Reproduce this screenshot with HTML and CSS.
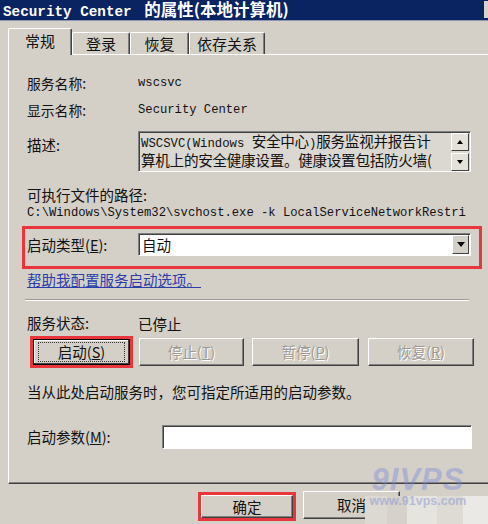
FILE: index.html
```html
<!DOCTYPE html>
<html lang="zh-CN">
<head>
<meta charset="utf-8">
<title>Security Center 的属性</title>
<link rel="stylesheet" href="styles.css">
</head>
<body>
<div class="window">
  <div class="titlebar">
    <span class="title"><span class="tmono">Security Center </span>的属性(本地计算机)</span>
    <span class="tbtn"></span>
  </div>
  <div class="tabs">
    <div class="tab active">常规</div>
    <div class="tab t2">登录</div>
    <div class="tab t3">恢复</div>
    <div class="tab t4">依存关系</div>
  </div>
  <div class="panel">
    <div class="row r1"><span class="lbl">服务名称:</span><span class="mono val">wscsvc</span></div>
    <div class="row r2"><span class="lbl">显示名称:</span><span class="mono val">Security Center</span></div>
    <div class="row r3">
      <span class="lbl lbl-top">描述:</span>
      <div class="desc">
        <div class="desc-text">
          <div class="dline"><span class="dmono">WSCSVC(Windows </span>安全中心<span class="dmono">)</span>服务监视并报告计</div>
          <div class="dline">算机上的安全健康设置。健康设置包括防火墙(</div>
        </div>
        <div class="scroll">
          <div class="sbtn"><span class="arr-up"></span></div>
          <div class="sbtn"><span class="arr-down"></span></div>
        </div>
      </div>
    </div>
    <div class="line r4">可执行文件的路径:</div>
    <div class="line mono path">C:\Windows\System32\svchost.exe -k LocalServiceNetworkRestri</div>
    <div class="redbox startup">
      <span class="lbl">启动类型(<u>E</u>):</span>
      <div class="combo">
        <span class="combo-text">自动</span>
        <span class="combo-btn"><span class="arr-down big"></span></span>
      </div>
    </div>
    <div class="line linkrow"><a class="link" href="#">帮助我配置服务启动选项。</a></div>
    <div class="sep"></div>
    <div class="row status"><span class="lbl">服务状态:</span><span class="val">已停止</span></div>
    <div class="btnrow">
      <div class="redbox start-wrap"><div class="btn default"><span class="focus">启动(<u>S</u>)</span></div></div>
      <div class="btn disabled w-stop">停止(<u>T</u>)</div>
      <div class="btn disabled w-pause">暂停(<u>P</u>)</div>
      <div class="btn disabled w-resume">恢复(<u>R</u>)</div>
    </div>
    <div class="line hint">当从此处启动服务时，您可指定所适用的启动参数。</div>
    <div class="row params">
      <span class="lbl plbl">启动参数(<u>M</u>):</span>
      <div class="input"></div>
    </div>
  </div>
  <div class="footer">
    <div class="redbox ok-wrap"><div class="btn fbtn">确定</div></div>
    <div class="btn fbtn cancel">取消</div>
  </div>
  <div class="mosaic">
    <span class="m m1"></span><span class="m m2"></span><span class="m m3"></span><span class="m m4"></span><span class="m m5"></span>
  </div>
  <div class="watermark">
    <div class="wm-big">9IVPS</div>
    <div class="wm-small">www.91vps.com</div>
  </div>
</div>
</body>
</html>
```
FILE: styles.css
```css
html, body {
  margin: 0;
  padding: 0;
}
body {
  background: #d4d0c8;
  width: 488px;
  height: 524px;
  overflow: hidden;
  font-family: "Noto Sans CJK SC", sans-serif;
  font-size: 14px;
  color: #111;
}
.window {
  position: relative;
  width: 488px;
  height: 524px;
  overflow: hidden;
}
u { text-decoration: underline; }

/* title bar */
.titlebar {
  height: 20px;
  background: #0a2361;
  display: flex;
  align-items: center;
  justify-content: space-between;
  border-bottom: 1px solid #8d95b0;
}
.title {
  color: #fff;
  font-weight: bold;
  font-size: 16.5px;
  line-height: 20px;
  padding-left: 3px;
  white-space: nowrap;
}
.tmono {
  font-family: "Liberation Mono", monospace;
  font-size: 14.3px;
  margin-right: 4px;
}
.tbtn {
  width: 4px;
  height: 17px;
  background: #d8d4cc;
  align-self: flex-start;
  margin-top: 1px;
}

/* tabs */
.tabs {
  display: flex;
  align-items: flex-end;
  height: 26px;
  margin-top: 7px;
  padding-left: 8px;
}
.tab {
  height: 22px;
  line-height: 22px;
  text-align: center;
  border-top: 1px solid #fff;
  border-left: 1px solid #fff;
  border-right: 1px solid #404040;
  box-shadow: inset -1px 0 #808080;
  border-radius: 2px 2px 0 0;
  box-sizing: border-box;
  font-size: 15px;
}
.tab.active {
  width: 64px;
  height: 27px;
  line-height: 24px;
  margin-bottom: -1px;
  background: #d4d0c8;
  position: relative;
  z-index: 2;
}
.t2 { width: 58px; }
.t3 { width: 59px; }
.t4 { width: 76px; }

/* panel */
.panel {
  margin-left: 8px;
  width: 490px;
  height: 410px;
  padding: 18px 0 0 18px;
  border-top: 1px solid #fff;
  border-left: 1px solid #fff;
  border-bottom: 1px solid #404040;
  box-shadow: 0 -1px 0 #808080 inset;
}
.row {
  display: flex;
  align-items: center;
  height: 20px;
}
.lbl {
  width: 111px;
  flex: none;
  font-size: 14.5px;
  line-height: 18px;
  white-space: nowrap;
}
.r1 .lbl, .r2 .lbl { font-size: 13.8px; }
.mono {
  font-family: "Liberation Mono", monospace;
  font-size: 12.2px;
}
.val { font-size: 14.5px; }
.mono.val { font-size: 12.2px; }
.r2 { margin-top: 7px; }
.r3 {
  margin-top: 11px;
  height: 41px;
  align-items: flex-start;
}
.lbl-top { padding-top: 5px; }
.desc {
  width: 333px;
  height: 41px;
  box-sizing: border-box;
  border-top: 1px solid #808080;
  border-left: 1px solid #808080;
  border-right: 1px solid #fff;
  border-bottom: 1px solid #fff;
  box-shadow: inset 1px 1px #404040;
  display: flex;
  justify-content: space-between;
  background: #dbd8d1;
}
.desc-text {
  padding: 1px 0 0 2px;
  line-height: 16px;
  font-size: 14.6px;
  white-space: nowrap;
  overflow: hidden;
  letter-spacing: -0.3px;
}
.dmono {
  font-family: "Liberation Mono", monospace;
  font-size: 12.3px;
  letter-spacing: 0;
}
.scroll {
  width: 18px;
  display: flex;
  flex-direction: column;
  gap: 2px;
  padding: 1px 1px 0 0;
}
.sbtn {
  height: 18px;
  box-sizing: border-box;
  background: #e4e1da;
  border-top: 1px solid #fff;
  border-left: 1px solid #fff;
  border-right: 1px solid #404040;
  border-bottom: 1px solid #404040;
  display: flex;
  align-items: center;
  justify-content: center;
}
.arr-up {
  width: 0; height: 0;
  border-left: 3.5px solid transparent;
  border-right: 3.5px solid transparent;
  border-bottom: 4px solid #000;
}
.arr-down {
  width: 0; height: 0;
  border-left: 3.5px solid transparent;
  border-right: 3.5px solid transparent;
  border-top: 4px solid #000;
}
.arr-down.big {
  border-left-width: 4px;
  border-right-width: 4px;
  border-top-width: 5px;
}
.line {
  line-height: 18px;
  height: 18px;
  white-space: nowrap;
  font-size: 14.5px;
}
.r4 { margin-top: 14px; }
.path { font-size: 12.2px; }

.redbox {
  border: 3px solid #e8363c;
  box-sizing: border-box;
}
.startup {
  margin-top: 4px;
  margin-left: -5px;
  width: 460px;
  height: 43px;
  padding: 4px 0 0 2px;
  display: flex;
  align-items: flex-start;
}
.startup .lbl {
  line-height: 23px;
}
.combo {
  width: 333px;
  height: 23px;
  box-sizing: border-box;
  background: #fff;
  border-top: 1px solid #808080;
  border-left: 1px solid #808080;
  border-right: 1px solid #fff;
  border-bottom: 1px solid #fff;
  box-shadow: inset 1px 1px #404040;
  display: flex;
  justify-content: space-between;
  align-items: center;
}
.combo-text {
  padding-left: 3px;
  font-size: 14.5px;
  line-height: 20px;
}
.combo-btn {
  width: 17px;
  height: 19px;
  margin-right: 1px;
  box-sizing: border-box;
  background: #d4d0c8;
  border-top: 1px solid #fff;
  border-left: 1px solid #fff;
  border-right: 1px solid #404040;
  border-bottom: 1px solid #404040;
  display: flex;
  align-items: center;
  justify-content: center;
}
.linkrow { margin-top: 2px; }
.link {
  color: #2a3ea8;
  text-decoration: underline;
  font-size: 14.5px;
}
.sep {
  margin-top: 10px;
  width: 444px;
  margin-left: -2px;
  height: 1px;
  background: #a09c94;
  border-bottom: 1px solid #fff;
}
.status { margin-top: 13px; height: 18px; }

.btnrow {
  margin-top: 4px;
  display: flex;
  align-items: center;
  height: 32px;
  margin-left: 3px;
}
.btn {
  box-sizing: border-box;
  height: 28px;
  background: #d4d0c8;
  border-top: 1px solid #fff;
  border-left: 1px solid #fff;
  border-right: 1px solid #404040;
  border-bottom: 1px solid #404040;
  box-shadow: inset -1px -1px #808080;
  display: flex;
  align-items: center;
  justify-content: center;
  font-size: 14.5px;
  line-height: 18px;
}
.start-wrap {
  width: 103px;
  height: 32px;
  margin-right: 6px;
}
.btn.default {
  width: 97px;
  height: 26px;
  border: 1px solid #000;
  box-shadow: inset -1px -1px #404040, inset 1px 1px #fff;
}
.focus {
  border: 1px dotted #333;
  width: 85px;
  height: 18px;
  text-align: center;
  line-height: 18px;
}
.disabled {
  color: #9e9a93;
  text-shadow: 1px 1px 0 #fff;
}
.w-stop { width: 105px; margin-right: 8px; }
.w-pause { width: 107px; margin-right: 9px; }
.w-resume { width: 106px; }

.hint { margin-top: 15px; }
.params {
  margin-top: 24px;
  height: 24px;
}
.plbl { width: 135px; }
.input {
  width: 310px;
  height: 24px;
  box-sizing: border-box;
  background: #fff;
  border-top: 1px solid #808080;
  border-left: 1px solid #808080;
  border-right: 1px solid #fff;
  border-bottom: 1px solid #fff;
  box-shadow: inset 1px 1px #404040;
}

/* footer */
.footer {
  display: flex;
  align-items: flex-start;
  margin-top: 8px;
  padding-left: 198px;
}
.ok-wrap {
  width: 98px;
  height: 29px;
  margin-right: 7px;
}
.ok-wrap .btn {
  width: 92px;
  height: 23px;
}
.fbtn { font-size: 14.5px; }
.cancel {
  width: 97px;
  height: 28px;
  margin-top: -1px;
}

/* watermark & mosaic overlay */
.mosaic {
  position: absolute;
  left: 365px;
  top: 496px;
  width: 123px;
  height: 28px;
  display: flex;
}
.m { display: block; height: 28px; }
.m1 { width: 22px; background: #dcd9d3; }
.m2 { width: 20px; background: #d6d2cb; }
.m3 { width: 30px; background: #e6e4df; }
.m4 { width: 26px; background: #dedbd5; }
.m5 { width: 25px; background: #ebe9e5; }
.watermark {
  position: absolute;
  left: 368px;
  top: 466px;
  width: 100px;
  text-align: center;
  font-family: "Liberation Sans", sans-serif;
  font-weight: bold;
}
.wm-big {
  font-size: 31px;
  font-style: italic;
  line-height: 28px;
  color: rgba(120, 135, 215, 0.42);
  letter-spacing: 1px;
}
.wm-small {
  font-size: 12.5px;
  line-height: 14px;
  color: rgba(130, 145, 210, 0.5);
}
```
